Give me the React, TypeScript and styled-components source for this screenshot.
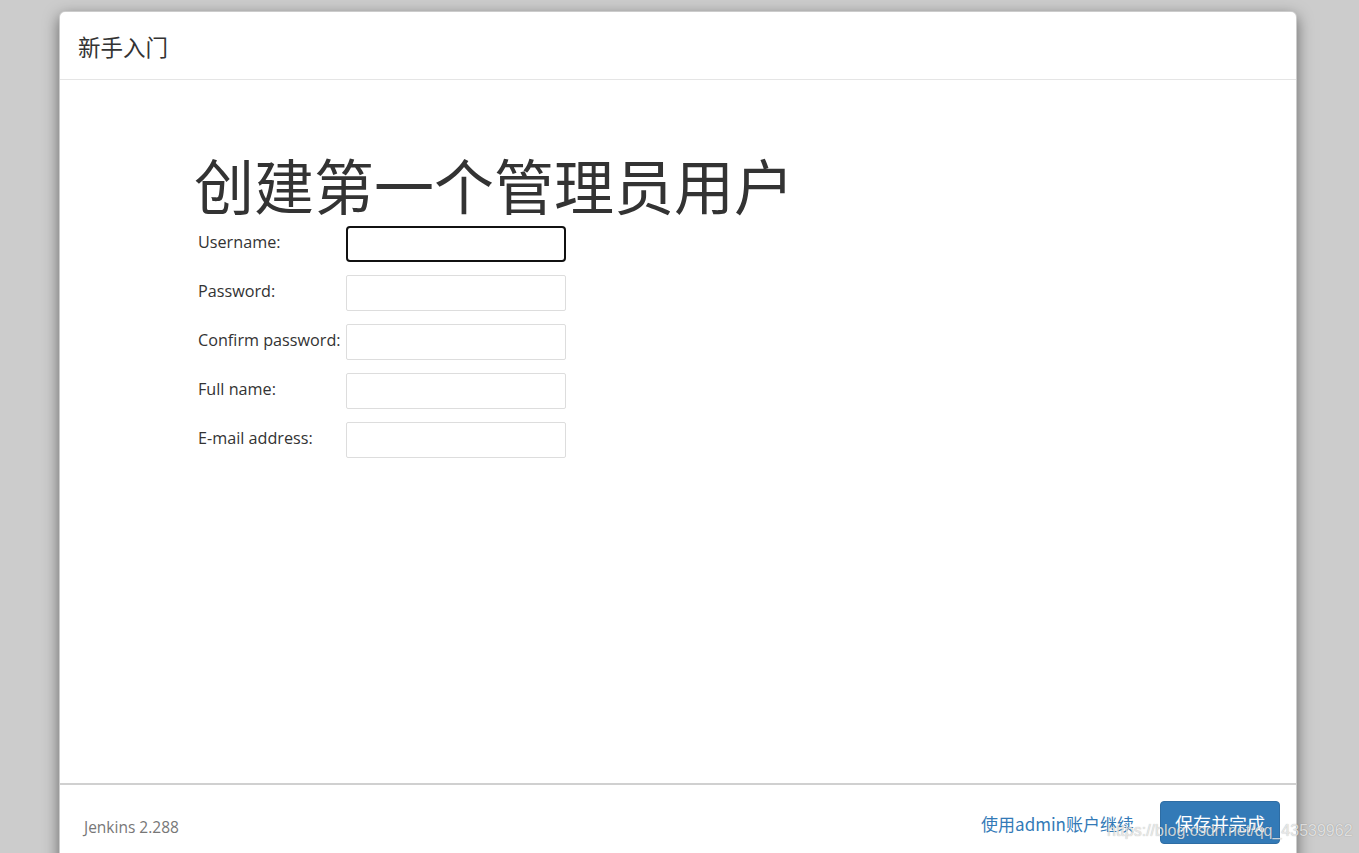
import React from "react";
import styled, { createGlobalStyle } from "styled-components";

const GlobalStyle = createGlobalStyle`
  html, body {
    margin: 0;
    padding: 0;
    background: #cccccc;
    height: 853px;
    overflow: hidden;
  }
  body {
    font-family: "Open Sans", "Noto Sans CJK SC", sans-serif;
    color: #333;
  }
  * { box-sizing: border-box; }
`;

const Page = styled.div`
  padding: 11px 0 0 59px;
  height: 853px;
`;

const Modal = styled.div`
  width: 1238px;
  height: 870px;
  background: #fff;
  border: 1px solid rgba(0, 0, 0, 0.2);
  border-radius: 6px;
  box-shadow: 0 5px 15px rgba(0, 0, 0, 0.5);
  display: flex;
  flex-direction: column;
`;

const Header = styled.div`
  height: 68px;
  flex: none;
  display: flex;
  align-items: center;
  padding-left: 18px;
  border-bottom: 1px solid #e5e5e5;
  font-family: "Noto Sans CJK SC", sans-serif;
  font-size: 22.5px;
  color: #333;
`;

const Body = styled.div`
  height: 703px;
  flex: none;
  padding: 66px 0 0 134px;
`;

const Title = styled.h1`
  margin: 0 0 4px 0;
  font-family: "Noto Sans CJK SC", sans-serif;
  font-weight: 400;
  font-size: 60px;
  line-height: 76px;
  color: #333;
`;

const Form = styled.div`
  display: flex;
  flex-direction: column;
  gap: 13px;
  padding-left: 4px;
`;

const Row = styled.div`
  display: flex;
  align-items: center;
`;

const Label = styled.label`
  width: 148px;
  font-size: 16.2px;
  color: #333;
  padding-bottom: 4px;
  white-space: nowrap;
`;

const Input = styled.div<{ $focused?: boolean }>`
  width: 220px;
  height: 36px;
  border: ${(p) => (p.$focused ? "2px solid #111" : "1px solid #dddddd")};
  border-radius: ${(p) => (p.$focused ? "4px" : "2px")};
  background: #fff;
`;

const Footer = styled.div`
  flex: 1;
  border-top: 2px solid #d0d0d0;
  display: flex;
  align-items: flex-start;
  padding: 16px 16px 0 24px;
  position: relative;
`;

const Version = styled.div`
  font-size: 15.5px;
  color: #777;
  margin-top: 15px;
`;

const Spacer = styled.div`
  flex: 1;
`;

const Link = styled.a`
  font-family: "Noto Sans CJK SC", sans-serif;
  font-size: 17px;
  color: #337ab7;
  text-decoration: none;
  margin-right: 26px;
  margin-top: 10px;
`;

const Button = styled.button`
  width: 120px;
  height: 43px;
  border: 1px solid #2e6da4;
  border-radius: 4px;
  background: #337ab7;
  color: #fff;
  font-family: "Noto Sans CJK SC", sans-serif;
  font-size: 18px;
  padding: 0;
`;

const Watermark = styled.div`
  position: absolute;
  z-index: 2;
  left: 1047px;
  top: 37px;
  font-family: "Liberation Sans", Arial, sans-serif;
  font-size: 16px;
  color: rgba(245, 245, 245, 0.8);
  text-shadow: 0 0 1px rgba(0, 0, 0, 0.35);
  white-space: nowrap;
  pointer-events: none;
`;

const fields = [
  { label: "Username:", focused: true },
  { label: "Password:" },
  { label: "Confirm password:" },
  { label: "Full name:" },
  { label: "E-mail address:" },
];

export default function App() {
  return (
    <>
      <GlobalStyle />
      <Page>
        <Modal>
          <Header>新手入门</Header>
          <Body>
            <Title>创建第一个管理员用户</Title>
            <Form>
              {fields.map((f) => (
                <Row key={f.label}>
                  <Label>{f.label}</Label>
                  <Input $focused={f.focused} />
                </Row>
              ))}
            </Form>
          </Body>
          <Footer>
            <Version>Jenkins 2.288</Version>
            <Spacer />
            <Link href="#">使用admin账户继续</Link>
            <Button>保存并完成</Button>
            <Watermark>https://blog.csdn.net/qq_43539962</Watermark>
          </Footer>
        </Modal>
      </Page>
    </>
  );
}
